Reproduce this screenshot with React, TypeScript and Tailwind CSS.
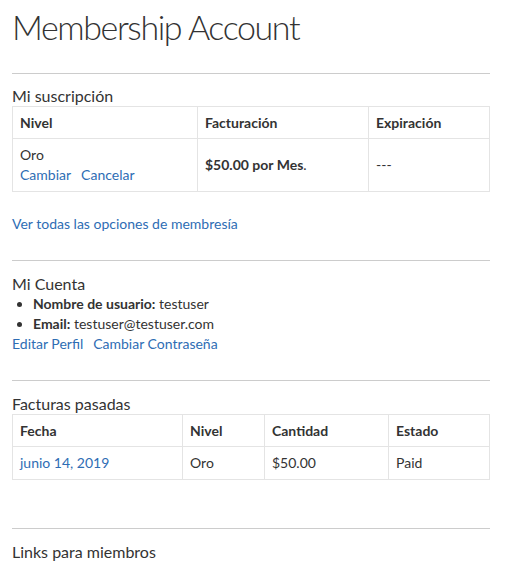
import React from "react";

const link = "text-[#2e6db4] hover:underline";
const th = "border border-[#e4e4e4] px-[7px] pt-[6px] pb-[5px] text-left font-bold leading-5";
const td = "border border-[#e4e4e4] px-[7px] py-[6px] align-middle leading-5";

const SectionTitle = ({ children, className = "" }: { children: React.ReactNode; className?: string }) => (
  <h3 className={`text-[16px] leading-5 ${className}`}>{children}</h3>
);

const Divider = ({ className = "" }: { className?: string }) => (
  <hr className={`border-0 border-t border-[#cccccc] ${className}`} />
);

export default function App() {
  return (
    <div
      className="min-h-screen bg-white pl-3 pr-4 text-[14px] text-[#333333]"
      style={{ fontFamily: '"Segoe UI", Lato, "Open Sans", sans-serif' }}
    >
      <h1 className="pt-[5px] text-[34px] font-light leading-[44px] tracking-[-1.4px]">Membership Account</h1>

      <Divider className="mt-6" />

      {/* Mi suscripción */}
      <SectionTitle className="mt-3">Mi suscripción</SectionTitle>
      <table className="w-full table-fixed border-collapse">
        <colgroup>
          <col className="w-[185px]" />
          <col className="w-[171px]" />
          <col />
        </colgroup>
        <thead>
          <tr>
            <th className={th}>Nivel</th>
            <th className={th}>Facturación</th>
            <th className={th}>Expiración</th>
          </tr>
        </thead>
        <tbody>
          <tr>
            <td className={td}>
              <div>Oro</div>
              <div className="flex gap-2.5">
                <a href="#" className={link}>Cambiar</a>
                <a href="#" className={link}>Cancelar</a>
              </div>
            </td>
            <td className={td}>
              <strong>$50.00 por Mes</strong>.
            </td>
            <td className={td}>---</td>
          </tr>
        </tbody>
      </table>

      <div className="mt-[22px] leading-5">
        <a href="#" className={link}>Ver todas las opciones de membresía</a>
      </div>

      <Divider className="mt-[26px]" />

      {/* Mi Cuenta */}
      <SectionTitle className="mt-[13px]">Mi Cuenta</SectionTitle>
      <ul className="list-disc pl-[21px] leading-5">
        <li>
          <strong>Nombre de usuario:</strong> testuser
        </li>
        <li>
          <strong>Email:</strong> testuser@testuser.com
        </li>
      </ul>
      <div className="flex gap-2.5 leading-5">
        <a href="#" className={link}>Editar Perfil</a>
        <a href="#" className={link}>Cambiar Contraseña</a>
      </div>

      <Divider className="mt-[26px]" />

      {/* Facturas pasadas */}
      <SectionTitle className="mt-[13px]">Facturas pasadas</SectionTitle>
      <table className="w-full table-fixed border-collapse">
        <colgroup>
          <col className="w-[170px]" />
          <col className="w-[82px]" />
          <col className="w-[124px]" />
          <col />
        </colgroup>
        <thead>
          <tr>
            <th className={th}>Fecha</th>
            <th className={th}>Nivel</th>
            <th className={th}>Cantidad</th>
            <th className={th}>Estado</th>
          </tr>
        </thead>
        <tbody>
          <tr>
            <td className={td}>
              <a href="#" className={link}>junio 14, 2019</a>
            </td>
            <td className={td}>Oro</td>
            <td className={td}>$50.00</td>
            <td className={td}>Paid</td>
          </tr>
        </tbody>
      </table>

      <Divider className="mt-12" />

      <SectionTitle className="mt-[13px]">Links para miembros</SectionTitle>
    </div>
  );
}
